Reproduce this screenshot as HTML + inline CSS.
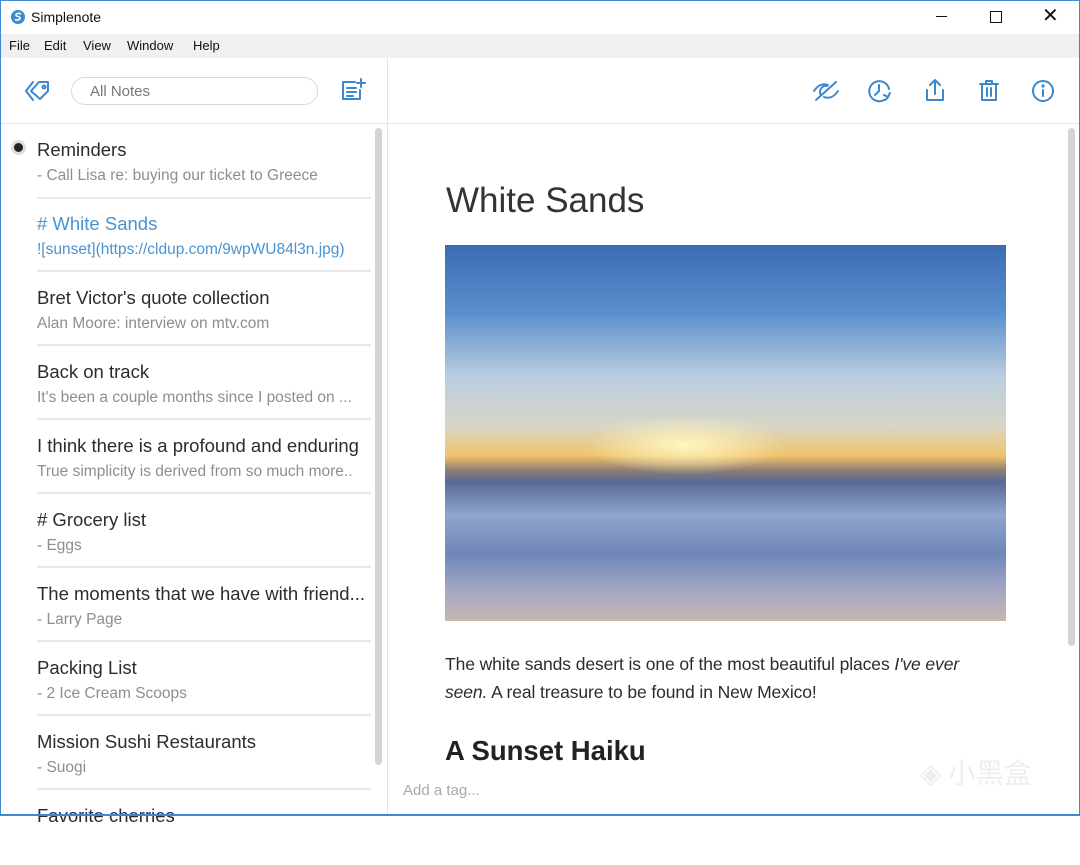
<!DOCTYPE html>
<html><head><meta charset="utf-8"><style>
*{margin:0;padding:0;box-sizing:border-box}
body{width:1080px;height:816px;overflow:hidden;background:#fff;font-family:"Liberation Sans",sans-serif;position:relative;color:#2c2c2c}
.frame{position:absolute;inset:0;border:1px solid #3c8ad6;border-bottom-width:2px}
.title{position:absolute;left:0;top:0;width:1080px;height:34px;background:#fff}
.menu{position:absolute;left:1px;top:34px;width:1078px;height:24px;background:#f0f0f0;font-size:13px;color:#111}
.menu span{position:absolute;top:4px}
.side{position:absolute;left:1px;top:58px;width:387px;height:756px;border-right:1px solid #e3e3e3}
.hdr{position:absolute;left:1px;top:58px;width:1078px;height:66px;border-bottom:1px solid #e6e6e6}
.search{position:absolute;left:71px;top:77px;width:247px;height:28px;border:1px solid #d9d9d9;border-radius:14px;font-size:15px;color:#777;padding:5px 0 0 18px}
.item{position:absolute;left:37px;width:334px;height:74px;border-bottom:2px solid #e8e8e8}
.item .t{position:absolute;top:3px;font-size:18.5px;color:#2c2c2c;white-space:nowrap}
.item .p{position:absolute;top:30px;font-size:15.5px;color:#8e8e8e;white-space:nowrap}
.blue{color:#4a93d2!important}
.sb{position:absolute;background:#d4d4d4;border-radius:4px;width:7px}
svg.i{position:absolute;fill:none;stroke:#3b88cf;stroke-width:2;stroke-linecap:round;stroke-linejoin:round}
</style></head><body>
<div class="title">
<svg style="position:absolute;left:11px;top:10px" width="14" height="14" viewBox="0 0 14 14"><circle cx="7" cy="7" r="7" fill="#3a88cf"/><path d="M4 9.5c2 1 5 .5 5-1.5S5 7 5 5s3-2 5-1" stroke="#fff" stroke-width="1.6" fill="none"/></svg>
<span style="position:absolute;left:31px;top:9px;font-size:14px;color:#111">Simplenote</span>
<span style="position:absolute;left:936px;top:16px;width:11px;height:1px;background:#111"></span>
<span style="position:absolute;left:990px;top:11px;width:12px;height:12px;border:1px solid #111"></span>
<span style="position:absolute;left:1042px;top:3px;font-size:20px;color:#111">✕</span>
</div>
<div class="menu"><span style="left:8px">File</span><span style="left:43px">Edit</span><span style="left:82px">View</span><span style="left:126px">Window</span><span style="left:192px">Help</span></div>
<div class="hdr"></div>
<div class="side"></div>
<svg class="i" style="left:24px;top:78px" width="28" height="26" viewBox="0 0 28 26"><path d="M9 4L2 13l7 9"/><path d="M15 4h9v9l-8 8-9-8z"/><circle cx="20" cy="9" r="1.5"/></svg>
<div class="search">All Notes</div>
<svg class="i" style="left:340px;top:77px" width="26" height="26" viewBox="0 0 26 26"><path d="M15 5H3v17h17v-9"/><path d="M7 11h9M7 15h9M7 19h6M21 2v8M17 6h8"/></svg>
<svg class="i" style="left:812px;top:78px" width="28" height="26" viewBox="0 0 28 26"><path d="M2 13c4-6 9-8 14-6M26 13c-4 6-9 8-14 6"/><path d="M4 22L24 4"/><path d="M9 17c-3-4 1-10 6-9"/></svg>
<svg class="i" style="left:867px;top:78px" width="26" height="26" viewBox="0 0 26 26"><path d="M22 11A10 10 0 1 0 17 22"/><path d="M12 7v6l-4 4"/><path d="M23 15l-2 4-4-2M21 19a8 8 0 0 1-3 3"/></svg>
<svg class="i" style="left:922px;top:77px" width="26" height="26" viewBox="0 0 26 26"><path d="M13 3v14M8 8l5-5 5 5M5 13v10h16V13"/></svg>
<svg class="i" style="left:976px;top:77px" width="26" height="26" viewBox="0 0 26 26"><path d="M4 7h18M10 7V4h6v3M6 7v16h14V7M11 11v8M15 11v8"/></svg>
<svg class="i" style="left:1030px;top:78px" width="26" height="26" viewBox="0 0 26 26"><circle cx="13" cy="13" r="10"/><path d="M13 12v6"/><circle cx="13" cy="8" r=".6" fill="#3b88cf"/></svg>

<div style="position:absolute;left:11px;top:140px;width:15px;height:15px;border-radius:50%;background:#ddd"><div style="margin:3px;width:9px;height:9px;border-radius:50%;background:#222"></div></div>
<div class="item" style="top:125px"><div class="t" style="top:14px">Reminders</div><div class="p" style="top:42px">- Call Lisa re: buying our ticket to Greece</div></div>
<div class="item" style="top:199px;height:73px"><div class="t blue" style="top:14px"># White Sands</div><div class="p blue" style="top:42px">![sunset](https://cldup.com/9wpWU84l3n.jpg)</div></div>
<div class="item" style="top:273px;height:73px"><div class="t" style="top:14px">Bret Victor's quote collection</div><div class="p" style="top:42px">Alan Moore: interview on mtv.com</div></div>
<div class="item" style="top:347px;height:73px"><div class="t" style="top:14px">Back on track</div><div class="p" style="top:42px">It's been a couple months since I posted on ...</div></div>
<div class="item" style="top:421px;height:73px"><div class="t" style="top:14px">I think there is a profound and enduring</div><div class="p" style="top:42px">True simplicity is derived from so much more..</div></div>
<div class="item" style="top:495px;height:73px"><div class="t" style="top:14px"># Grocery list</div><div class="p" style="top:42px">- Eggs</div></div>
<div class="item" style="top:569px;height:73px"><div class="t" style="top:14px">The moments that we have with friend...</div><div class="p" style="top:42px">- Larry Page</div></div>
<div class="item" style="top:643px;height:73px"><div class="t" style="top:14px">Packing List</div><div class="p" style="top:42px">- 2 Ice Cream Scoops</div></div>
<div class="item" style="top:717px;height:73px"><div class="t" style="top:14px">Mission Sushi Restaurants</div><div class="p" style="top:42px">- Suogi</div></div>
<div class="item" style="top:791px;border:0"><div class="t" style="top:14px">Favorite cherries</div></div>
<div class="sb" style="left:375px;top:128px;height:637px"></div>
<div class="sb" style="left:1068px;top:128px;height:518px"></div>

<div style="position:absolute;left:446px;top:181px;font-size:35px;color:#333">White Sands</div>
<div style="position:absolute;left:445px;top:245px;width:561px;height:376px;background:linear-gradient(180deg,#3a6cb4 0%,#5a8fce 18%,#b9cde0 35%,#d8d6c8 48%,#f1c46a 56%,#8c7c74 60%,#5a6a95 63%,#8fa5cc 72%,#6e86b8 82%,#a4a8c4 92%,#c7b7b0 100%)">
<div style="position:absolute;left:140px;top:170px;width:200px;height:60px;border-radius:50%;background:radial-gradient(#fff6c0,rgba(255,210,120,0) 70%)"></div></div>
<div style="position:absolute;left:445px;top:650px;width:600px;font-size:17.5px;line-height:28px;color:#2c2c2c;letter-spacing:-0.1px">The white sands desert is one of the most beautiful places <i>I've ever</i><br><i>seen.</i> A real treasure to be found in New Mexico!</div>
<div style="position:absolute;left:445px;top:735px;font-size:27.5px;font-weight:bold;color:#222">A Sunset Haiku</div>
<div style="position:absolute;left:389px;top:770px;width:678px;height:44px;background:#fff"></div>
<div style="position:absolute;left:403px;top:782px;font-size:15px;color:#a9a9a9">Add a tag...</div>
<div style="position:absolute;left:920px;top:752px;font-size:28px;color:#eeeeee;font-family:'Noto Sans CJK SC',sans-serif">◈ 小黑盒</div>
<div class="frame"></div>
</body></html>
